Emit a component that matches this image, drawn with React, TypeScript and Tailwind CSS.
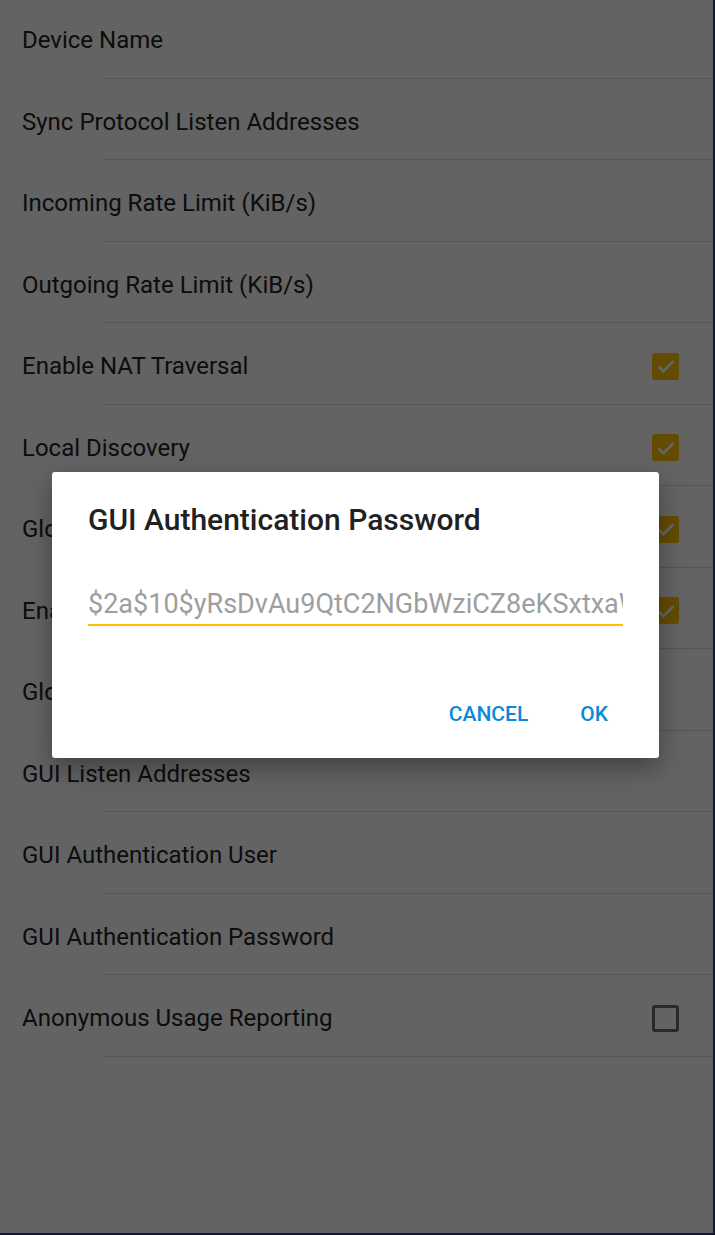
import React from 'react';

interface SettingRow {
  label: string;
  checkbox?: 'on' | 'off';
}

const rows: SettingRow[] = [
  { label: 'Device Name' },
  { label: 'Sync Protocol Listen Addresses' },
  { label: 'Incoming Rate Limit (KiB/s)' },
  { label: 'Outgoing Rate Limit (KiB/s)' },
  { label: 'Enable NAT Traversal', checkbox: 'on' },
  { label: 'Local Discovery', checkbox: 'on' },
  { label: 'Global Discovery', checkbox: 'on' },
  { label: 'Enable Relaying', checkbox: 'on' },
  { label: 'Global Announce Servers' },
  { label: 'GUI Listen Addresses' },
  { label: 'GUI Authentication User' },
  { label: 'GUI Authentication Password' },
  { label: 'Anonymous Usage Reporting', checkbox: 'off' },
];

const CheckBox: React.FC<{ checked: boolean }> = ({ checked }) =>
  checked ? (
    <div className="w-[27px] h-[27px] rounded-[3px] bg-[#ffc107] flex items-center justify-center">
      <svg width="22" height="22" viewBox="0 0 24 24" fill="none">
        <path d="M4 12.5l5.2 5.2L20 6.8" stroke="#ffffff" strokeWidth="3.2" />
      </svg>
    </div>
  ) : (
    <div className="w-[27px] h-[27px] rounded-[3px] border-[3px] border-[#6a6a6a]" />
  );

const App: React.FC = () => {
  return (
    <div
      className="relative w-[715px] h-[1235px] overflow-hidden bg-white border-r-2 border-b-2 border-[#151538]"
      style={{ fontFamily: 'Roboto, "Noto Sans", sans-serif' }}
    >
      {/* settings list */}
      <div className="-mt-[3px]">
        {rows.map((row) => (
          <div key={row.label} className="relative h-[81.5px] pt-[5px] flex items-center pl-[22px] pr-[34px]">
            <span className="flex-1 text-[24px] text-[#222222]">{row.label}</span>
            {row.checkbox && <CheckBox checked={row.checkbox === 'on'} />}
            <div className="absolute left-[105px] right-0 bottom-0 h-px bg-[#d8d8d8]" />
          </div>
        ))}
      </div>

      {/* scrim */}
      <div className="absolute inset-0 bg-[rgba(0,0,0,0.61)]" />

      {/* dialog */}
      <div className="absolute left-[52px] top-[472px] w-[607px] h-[286px] bg-white rounded-[3px] shadow-[0_10px_24px_rgba(0,0,0,0.35)] flex flex-col">
        <div className="pl-[36px] pt-[30px] text-[30px] leading-[36px] font-medium text-[#212121]">
          GUI Authentication Password
        </div>
        <div className="mx-[36px] mt-[50px] border-b-[2.5px] border-[#ffc107] pb-[4px] overflow-hidden whitespace-nowrap">
          <span className="text-[27px] leading-[32px] text-[#9e9e9e]">
            $2a$10$yRsDvAu9QtC2NGbWziCZ8eKSxtxaWkl3h1pQ
          </span>
        </div>
        <div className="flex justify-end items-start gap-[52px] pr-[51px] mt-[76px] text-[21px] leading-[24px] font-medium text-[#0a8ad6]">
          <span>CANCEL</span>
          <span>OK</span>
        </div>
      </div>
    </div>
  );
};

export default App;
